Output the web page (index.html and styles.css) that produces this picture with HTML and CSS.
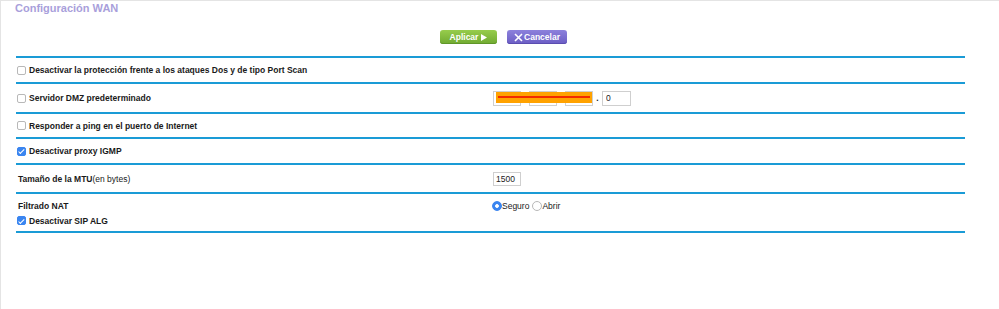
FILE: index.html
```html
<!DOCTYPE html>
<html lang="es">
<head>
    <meta charset="UTF-8">
    <meta name="viewport" content="width=device-width, initial-scale=1.0">
    <title>Configuración WAN</title>
    <link rel="stylesheet" href="styles.css">
</head>
<body>
    <div class="page">
        <h1 class="title">Configuración WAN</h1>

        <div class="actions">
            <button class="btn btn-apply">Aplicar
                <svg class="btn-icon" width="6" height="7" viewBox="0 0 6 7"><path d="M0 0 L6 3.5 L0 7 Z" fill="#fff"/></svg>
            </button>
            <button class="btn btn-cancel">
                <svg class="btn-x" width="9" height="9" viewBox="0 0 9 9"><path d="M1 1 L8 8 M8 1 L1 8" stroke="#fff" stroke-width="1.6"/></svg>Cancelar
            </button>
        </div>

        <div class="form">
            <div class="row row-1">
                <label class="check-label"><input type="checkbox" class="check">Desactivar la protección frente a los ataques Dos y de tipo Port Scan</label>
            </div>

            <div class="row row-2">
                <label class="check-label"><input type="checkbox" class="check">Servidor DMZ predeterminado</label>
                <div class="ip">
                    <input type="text" class="field ip-part" value="">
                    <input type="text" class="field ip-part" value="">
                    <input type="text" class="field ip-part" value="">
                    <span class="dot">.</span>
                    <input type="text" class="field ip-last" value="0">
                    <span class="redact"></span>
                </div>
            </div>

            <div class="row row-3">
                <label class="check-label"><input type="checkbox" class="check">Responder a ping en el puerto de Internet</label>
            </div>

            <div class="row row-4">
                <label class="check-label"><input type="checkbox" class="check" checked>Desactivar proxy IGMP</label>
            </div>

            <div class="row row-5">
                <div class="text-label"><b>Tamaño de la MTU</b>(en bytes)</div>
                <div class="value"><input type="text" class="field mtu" value="1500"></div>
            </div>

            <div class="row row-6">
                <div class="text-label"><b>Filtrado NAT</b></div>
                <div class="radios">
                    <label class="radio-label"><input type="radio" name="nat" class="radio" checked>Seguro</label>
                    <label class="radio-label"><input type="radio" name="nat" class="radio">Abrir</label>
                </div>
                <label class="check-label"><input type="checkbox" class="check" checked>Desactivar SIP ALG</label>
            </div>
        </div>
    </div>
</body>
</html>
```

FILE: styles.css
```css
* {
    box-sizing: border-box;
}

body {
    margin: 0;
    font-family: "Liberation Sans", Arial, sans-serif;
    font-size: 8.5px;
    color: #1a1a1a;
    background-color: #fff;
}

.page {
    height: 309px;
    border-top: 1px solid #e4e4e4;
    border-left: 1px solid #e4e4e4;
}

.title {
    margin: 0;
    padding: 1px 0 0 14px;
    font-size: 11px;
    line-height: 13px;
    font-weight: bold;
    color: #a99fdb;
}

.actions {
    display: flex;
    gap: 10px;
    padding-left: 439px;
    margin-top: 15px;
}

.btn {
    display: flex;
    align-items: center;
    justify-content: center;
    height: 14px;
    padding: 0;
    border: none;
    border-radius: 3px;
    color: #fff;
    font-family: "Liberation Sans", Arial, sans-serif;
    font-size: 8.5px;
    font-weight: bold;
}

.btn-apply {
    width: 57px;
    gap: 3px;
    background: linear-gradient(#97cd4c, #70aa31);
    box-shadow: inset 0 -1px 0 #5f9628;
}

.btn-cancel {
    width: 60px;
    background: linear-gradient(#8c81dc, #6b5dc4);
    box-shadow: inset 0 -1px 0 #5a4db0;
}

.btn-x {
    margin-right: 1px;
}

.form {
    margin: 12px 34px 0 15px;
    border-top: 2px solid #1a9bd6;
}

.row {
    display: grid;
    grid-template-columns: 476px 1fr;
    align-items: center;
    border-bottom: 2px solid #1a9bd6;
    font-weight: bold;
}

.row-1 { height: 26px; }
.row-2 { height: 30px; }
.row-3 { height: 25px; }
.row-4 { height: 26px; }
.row-5 { height: 29px; }

.row-6 {
    height: 39px;
    align-items: center;
    align-content: start;
    grid-auto-rows: 13px;
    row-gap: 2px;
    padding-top: 5px;
}

.check-label {
    display: flex;
    align-items: center;
    gap: 3px;
    padding-left: 1px;
}

.text-label {
    padding-left: 2px;
}

.text-label {
    font-weight: normal;
}

.check {
    appearance: none;
    position: relative;
    width: 9px;
    height: 9px;
    margin: 0;
    border: 1px solid #b8b8b8;
    border-radius: 2px;
    background-color: #fff;
}

.check:checked {
    background-color: #3a85f0;
    border-color: #3a85f0;
}

.check:checked::after {
    content: "";
    position: absolute;
    left: 2.3px;
    top: 0.6px;
    width: 2.4px;
    height: 4.6px;
    border: solid #fff;
    border-width: 0 1.3px 1.3px 0;
    transform: rotate(45deg);
}

.ip {
    position: relative;
    display: flex;
    align-items: center;
    margin-left: 1px;
}

.field {
    height: 15px;
    margin: 0;
    padding: 0 3px;
    border: 1px solid #cfcfcf;
    font-family: "Liberation Sans", Arial, sans-serif;
    font-size: 8.5px;
    color: #222;
    background-color: #fff;
}

.ip-part {
    width: 28px;
    margin-right: 8px;
}

.ip-part:nth-child(3) {
    margin-right: 0;
}

.dot {
    width: 9px;
    text-align: center;
    font-weight: bold;
}

.ip-last {
    width: 29px;
}

.redact {
    position: absolute;
    left: 3px;
    top: 1px;
    width: 96px;
    height: 11px;
    background-color: #ffa200;
}

.redact::after {
    content: "";
    position: absolute;
    left: 2px;
    right: 2px;
    top: 4.5px;
    height: 2px;
    background-color: #f22a00;
}

.value {
    margin-left: 1px;
}

.mtu {
    width: 28px;
    height: 14px;
    padding: 0 2px;
}

.radios {
    display: flex;
    align-items: center;
    gap: 3px;
    font-weight: normal;
}

.radio-label {
    display: flex;
    align-items: center;
}

.radio {
    appearance: none;
    width: 10px;
    height: 10px;
    margin: 0;
    border: 1px solid #b8b8b8;
    border-radius: 50%;
    background-color: #fff;
}

.radio:checked {
    border-color: #3a85f0;
    background: radial-gradient(circle, #fff 0 1.5px, #3a85f0 2.2px);
}
```
